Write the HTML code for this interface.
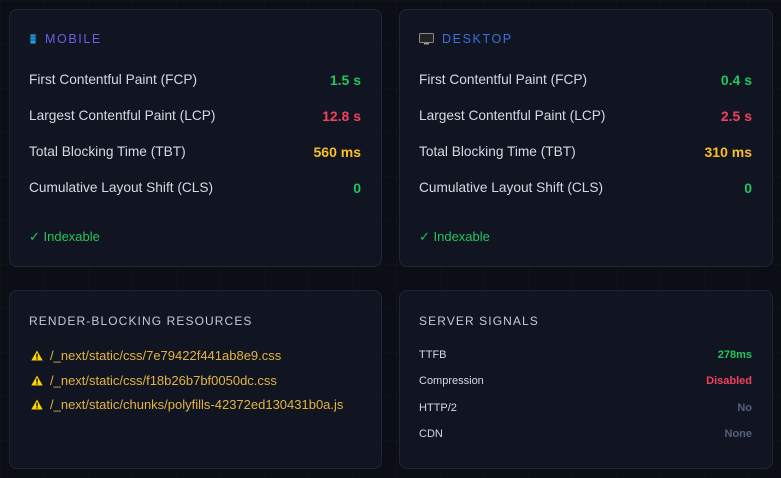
<!DOCTYPE html>
<html><head><style>
body{margin:0;width:781px;height:478px;overflow:hidden;background:#0b0f15;
background-image:linear-gradient(rgba(255,255,255,0.015) 1px,transparent 1px),linear-gradient(90deg,rgba(255,255,255,0.015) 1px,transparent 1px);background-size:44px 44px;
font-family:"Liberation Sans","DejaVu Sans",sans-serif;position:relative}
.card{position:absolute;background:#111522;border:1px solid #1d2638;border-radius:8px;box-sizing:border-box}
.h{position:absolute;left:19px;top:22px;font-size:12.5px;letter-spacing:1.6px;display:flex;align-items:center}
.row{position:absolute;left:19px;right:20px;display:flex;justify-content:space-between;font-size:13.7px;color:#d5d9e2}
.row b{font-size:14px}
.g{color:#22c55e}.r{color:#f43f5e}.y{color:#fbbf24}
.ix{position:absolute;left:19px;top:219px;font-size:13px;color:#22c55e}
.f{position:absolute;left:21px;font-size:13px;color:#e3b341;display:flex;align-items:center}
.f svg{margin-right:7px}
.s{position:absolute;left:19px;right:20px;display:flex;justify-content:space-between;font-size:11px;color:#d5d9e2}
.s b{font-size:11px}
</style></head><body>
<div class="card" style="left:9px;top:9px;width:373px;height:258px">
 <div class="h" style="color:#6d5ce8"><svg width="8" height="12" style="margin-right:8px"><rect x="0" y="0" width="8" height="12" fill="#1a1a1a"/><rect x="1.5" y="1.5" width="5" height="9" fill="#1ea0e8"/><line x1="2" y1="4" x2="6" y2="4" stroke="#0b3d80"/><line x1="2" y1="7" x2="6" y2="7" stroke="#0b3d80"/></svg>MOBILE</div>
 <div class="row" style="top:62px"><span>First Contentful Paint (FCP)</span><b class="g">1.5 s</b></div>
 <div class="row" style="top:98px"><span>Largest Contentful Paint (LCP)</span><b class="r">12.8 s</b></div>
 <div class="row" style="top:134px"><span>Total Blocking Time (TBT)</span><b class="y">560 ms</b></div>
 <div class="row" style="top:170px"><span>Cumulative Layout Shift (CLS)</span><b class="g">0</b></div>
 <div class="ix">✓ Indexable</div>
</div>
<div class="card" style="left:399px;top:9px;width:374px;height:258px">
 <div class="h" style="color:#3b6fe0"><svg width="15" height="12" style="margin-right:8px"><rect x="0.5" y="0.5" width="14" height="9" rx="1" fill="#222" stroke="#888"/><rect x="5" y="10" width="5" height="1.5" fill="#999"/></svg>DESKTOP</div>
 <div class="row" style="top:62px"><span>First Contentful Paint (FCP)</span><b class="g">0.4 s</b></div>
 <div class="row" style="top:98px"><span>Largest Contentful Paint (LCP)</span><b class="r">2.5 s</b></div>
 <div class="row" style="top:134px"><span>Total Blocking Time (TBT)</span><b class="y">310 ms</b></div>
 <div class="row" style="top:170px"><span>Cumulative Layout Shift (CLS)</span><b class="g">0</b></div>
 <div class="ix">✓ Indexable</div>
</div>
<div class="card" style="left:9px;top:290px;width:373px;height:179px">
 <div class="h" style="color:#c5cad4;top:23px;font-size:12px;letter-spacing:1.1px">RENDER-BLOCKING RESOURCES</div>
 <div class="f" style="top:57px"><svg width="12" height="11"><path d="M6 0.5L11.7 10.5H0.3Z" fill="#fcd400"/><rect x="5.3" y="3.5" width="1.4" height="4" fill="#111"/><rect x="5.3" y="8.2" width="1.4" height="1.3" fill="#111"/></svg>/_next/static/css/7e79422f441ab8e9.css</div>
 <div class="f" style="top:82px"><svg width="12" height="11"><path d="M6 0.5L11.7 10.5H0.3Z" fill="#fcd400"/><rect x="5.3" y="3.5" width="1.4" height="4" fill="#111"/><rect x="5.3" y="8.2" width="1.4" height="1.3" fill="#111"/></svg>/_next/static/css/f18b26b7bf0050dc.css</div>
 <div class="f" style="top:106px"><svg width="12" height="11"><path d="M6 0.5L11.7 10.5H0.3Z" fill="#fcd400"/><rect x="5.3" y="3.5" width="1.4" height="4" fill="#111"/><rect x="5.3" y="8.2" width="1.4" height="1.3" fill="#111"/></svg>/_next/static/chunks/polyfills-42372ed130431b0a.js</div>
</div>
<div class="card" style="left:399px;top:290px;width:374px;height:179px">
 <div class="h" style="color:#c5cad4;top:23px;font-size:12px;letter-spacing:1.1px">SERVER SIGNALS</div>
 <div class="s" style="top:58px"><span>TTFB</span><b class="g">278ms</b></div>
 <div class="s" style="top:84px"><span>Compression</span><b class="r">Disabled</b></div>
 <div class="s" style="top:111px"><span>HTTP/2</span><b style="color:#56607a">No</b></div>
 <div class="s" style="top:137px"><span>CDN</span><b style="color:#56607a">None</b></div>
</div>
</body></html>
